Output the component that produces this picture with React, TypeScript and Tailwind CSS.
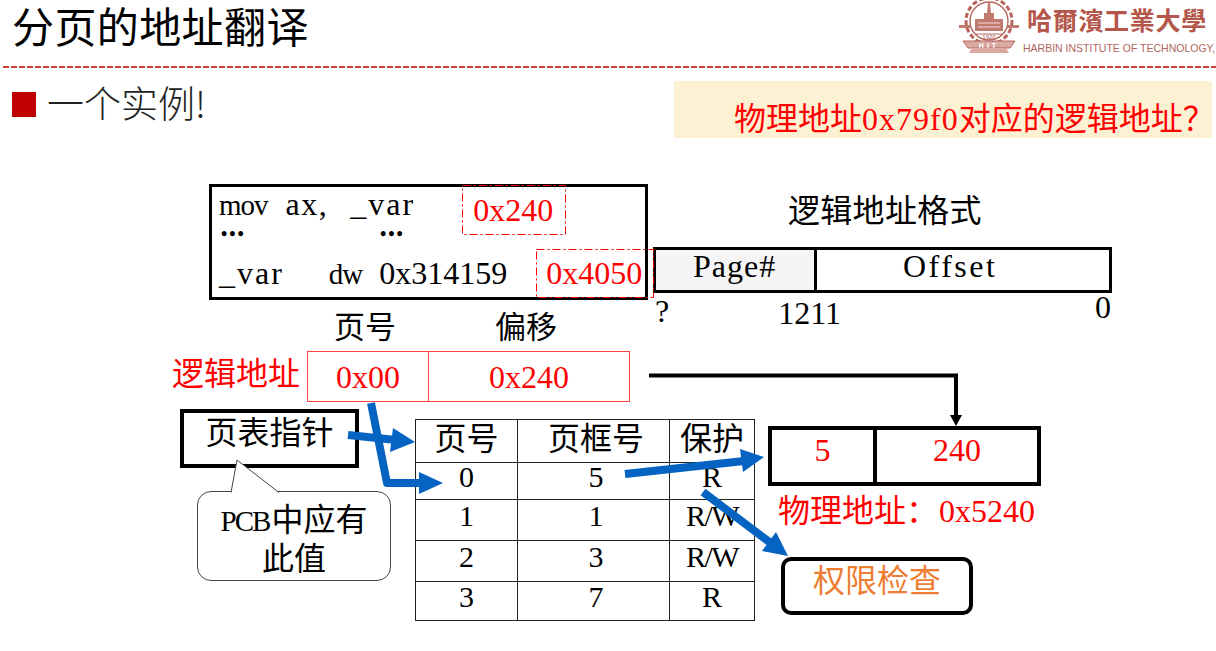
const tableRows = [
  ["页号", "页框号", "保护"],
  ["0", "5", "R"],
  ["1", "1", "R/W"],
  ["2", "3", "R/W"],
  ["3", "7", "R"],
];

function HitLogo() {
  return (
    <svg width="64" height="56" viewBox="0 0 64 56" className="shrink-0">
      <g fill="none" stroke="#b5655a">
        <circle cx="31" cy="21" r="23" strokeWidth="3" strokeDasharray="5 2.5" />
        <circle cx="31" cy="21" r="19" strokeWidth="1.4" />
      </g>
      <g fill="#c07a70">
        <path d="M30 3h2l1 10h-4z" />
        <rect x="26" y="13" width="10" height="6" />
        <rect x="17" y="19" width="28" height="12" />
        <rect x="1" y="25" width="12" height="3" />
        <rect x="49" y="25" width="12" height="3" />
      </g>
      <path d="M20 23h22M20 27h22" stroke="#f3dcd8" strokeWidth="1" />
      <path d="M18 34h26" stroke="#b5655a" strokeWidth="1" />
      <path d="M5 41h52l-5 7H10z" fill="#d9a9a2" stroke="#b5655a" strokeWidth="1" />
      <path d="M14 48h34l3 5H11z" fill="#d9a9a2" />
      <text x="31" y="38.5" fontSize="6" fontFamily="Liberation Sans" fill="#a5584d" textAnchor="middle">1920</text>
      <text x="31" y="47.5" fontSize="7" fontWeight="700" letterSpacing="3" fontFamily="Liberation Sans" fill="#fff" textAnchor="middle">HIT</text>
    </svg>
  );
}

function Overlay() {
  return (
    <svg width="1216" height="651" className="absolute inset-0 pointer-events-none">
      <g fill="none" stroke="#ff0000" strokeWidth="1" strokeDasharray="8 3 2 3">
        <rect x="462.5" y="185.5" width="103" height="49" />
        <rect x="536.5" y="249.5" width="117" height="48" />
      </g>
      <path d="M649 375.5H956V418" fill="none" stroke="#000" strokeWidth="4" />
      <path d="M950 415h12l-6 11z" fill="#000" />
      <g fill="none" stroke="#0563c1" strokeWidth="8" strokeLinejoin="round">
        <path d="M348 435L396 440" />
        <path d="M371 403L387 483H422" />
        <path d="M625 474L744 461" />
        <path d="M703 492L772 544" />
      </g>
      <g fill="#0563c1">
        <path d="M393 428L390 452L415 442z" />
        <path d="M419 472V494L443 483z" />
        <path d="M740 449L743 472L764 457z" />
        <path d="M776 532L762 551L788 556z" />
      </g>
    </svg>
  );
}

function CodeBox() {
  return (
    <div className="absolute left-[209px] top-[184px] w-[439px] h-[116px] border-[3px] border-black pl-[7px] whitespace-pre text-[32px] leading-[32px]">
      <div className="flex items-start h-[31px]">
        <span className="mt-[2px] text-[29px] tracking-[-1px]">mov</span>
        <span className="ml-[18px] mt-[1px] tracking-[1.5px]">ax,</span>
        <span className="ml-[22px] mt-[1px] tracking-[2px]">_var</span>
        <span className="ml-[58px] mt-[7px] text-[#ff0000]">0x240</span>
      </div>
      <div className="flex items-start h-[26px] pt-[6px] text-[18px] leading-[20px] tracking-[2px] font-bold">
        <span className="ml-[2px]">•••</span>
        <span className="ml-[134px]">•••</span>
      </div>
      <div className="flex items-baseline h-[32px] mt-[13px]">
        <span className="tracking-[2px]">_var</span>
        <span className="ml-[45px] text-[29px] tracking-[-1px]">dw</span>
        <span className="ml-[17px]">0x314159</span>
        <span className="ml-[39px] text-[#ff0000]">0x4050</span>
      </div>
    </div>
  );
}

function AddressFormat() {
  return (
    <div className="absolute left-[653px] top-[195px] w-[459px] text-[32px] leading-[32px]">
      <div className="pl-[135px] tracking-[0.3px] whitespace-nowrap">逻辑地址格式</div>
      <div className="flex h-[46px] mt-[20px] border-[3px] border-black">
        <div className="w-[161px] h-full bg-[#f5f5f5] border-r-[3px] border-black pl-[37px] tracking-[1px]">Page#</div>
        <div className="flex-1 pl-[86px] tracking-[2.5px]">Offset</div>
      </div>
      <div className="flex items-start">
        <span className="mt-[2px] ml-[2px]">?</span>
        <span className="mt-[4px] ml-[109px]">1211</span>
        <span className="ml-auto mr-[1px] -mt-[2px]">0</span>
      </div>
    </div>
  );
}

function LogicalAddress() {
  return (
    <div className="absolute left-[172px] top-[312px] w-[458px]">
      <div className="flex h-[32px] pl-[162px] gap-[99px] text-[31px] leading-[32px] whitespace-nowrap">
        <span>页号</span>
        <span>偏移</span>
      </div>
      <div className="flex items-start mt-[7px] text-[32px] leading-[32px] text-[#ff0000]">
        <span className="w-[135px] mt-[7px] whitespace-nowrap">逻辑地址</span>
        <div className="flex w-[323px] h-[51px] border border-[#ff4040]">
          <div className="w-[121px] border-r border-[#ff4040] flex items-center justify-center">0x00</div>
          <div className="flex-1 flex items-center justify-center">0x240</div>
        </div>
      </div>
    </div>
  );
}

function PagePointer() {
  return (
    <div className="absolute left-[180px] top-[409px] w-[211px]">
      <div className="w-[179px] h-[59px] border-[4px] border-black text-center text-[32px] leading-[40px] whitespace-nowrap">页表指针</div>
      <div className="relative ml-[17px] mt-[23px] w-[194px] h-[90px] rounded-[14px] border border-[#444] bg-white pt-[9px] text-center text-[32px] leading-[39px]">
        <svg width="52" height="34" className="absolute left-[32px] -top-[33px]">
          <path d="M1 33.5L7 1L49 33.5" fill="#fff" stroke="#444" strokeWidth="1" />
        </svg>
        <div className="h-[39px]"><span className="text-[29px] tracking-[-2px] mr-[2px]">PCB</span>中应有</div>
        <div className="h-[39px]">此值</div>
      </div>
    </div>
  );
}

function PageTable() {
  return (
    <div className="absolute left-[415px] top-[419px] w-[340px] h-[202px] grid grid-cols-[102px_152px_85px] grid-rows-[43px_37px_41px_41px_39px] border-t border-l border-[#222]">
      {tableRows.map((row, i) =>
        row.map((cell, j) => (
          <div
            key={i + "-" + j}
            className={
              "flex items-center justify-center border-r border-b border-[#222] whitespace-nowrap " +
              (i === 0 ? "pb-[4px] text-[32px] leading-[32px] " : "pb-[8px] text-[30px] leading-[30px] ") +
              (j === 1 ? "pl-[5px] " : "") +
              (j === 2 && cell === "R/W" ? "text-[28px] tracking-[-1.5px]" : "")
            }
          >
            {cell}
          </div>
        ))
      )}
    </div>
  );
}

function PhysicalAddress() {
  return (
    <div className="absolute left-[768px] top-[426px] w-[273px] text-[32px] leading-[32px]">
      <div className="flex h-[60px] border-[4px] border-black text-[#ff0000]">
        <div className="w-[105px] border-r-[4px] border-black text-center pt-[4px]">5</div>
        <div className="flex-1 text-center pt-[4px]">240</div>
      </div>
      <div className="mt-[9px] pl-[10px] text-[#ff0000] whitespace-nowrap">物理地址：<span className="ml-[1px]">0x5240</span></div>
      <div className="ml-[13px] mt-[30px] w-[192px] h-[58px] rounded-[10px] border-[4px] border-black text-center leading-[40px] text-[#ed7d31] whitespace-nowrap">权限检查</div>
    </div>
  );
}

export default function App() {
  return (
    <div className="relative w-[1216px] h-[651px] overflow-hidden bg-white text-black font-['Liberation_Serif','Noto_Sans_CJK_SC',serif]">
      <header className="flex items-start justify-between h-[66px] pl-[12px]">
        <h1 className="text-[42px] leading-[50px] tracking-[0.4px] font-normal font-['Noto_Sans_CJK_SC',sans-serif]">分页的地址翻译</h1>
        <div className="flex items-start w-[258px] shrink-0">
          <HitLogo />
          <div className="ml-[1px] whitespace-nowrap">
            <div className="mt-[4px] pl-[4px] text-[25px] leading-[30px] tracking-[0.7px] font-bold text-[#b5564a] font-['Noto_Sans_CJK_TC',sans-serif]">哈爾濱工業大學</div>
            <div className="mt-[8px] text-[10.5px] leading-[12px] text-[#b0665c] font-['Liberation_Sans',sans-serif]">HARBIN INSTITUTE OF TECHNOLOGY,</div>
          </div>
        </div>
      </header>
      <div className="h-[2px] ml-[3px] bg-[repeating-linear-gradient(90deg,#c8402f_0_6px,transparent_6px_8px)]" />

      <div className="flex items-start justify-between pl-[12px] pr-[4px] pt-[13px]">
        <div className="flex items-center gap-[11px] mt-[6px]">
          <span className="w-[24px] h-[25px] bg-[#c00000]" />
          <span className="-mt-[5px] text-[37px] leading-[40px] font-light text-[#222] font-['Noto_Sans_CJK_SC',sans-serif]">一个实例!</span>
        </div>
        <div className="w-[538px] h-[57px] bg-[#fdf1d3] pl-[60px] pt-[20px] text-[32px] leading-[36px] text-[#ff0000] whitespace-nowrap">
          物理地址<span className="tracking-[1px]">0x79f0</span>对应的逻辑地址？
        </div>
      </div>

      <CodeBox />
      <AddressFormat />
      <LogicalAddress />
      <PagePointer />
      <PageTable />
      <PhysicalAddress />
      <Overlay />
    </div>
  );
}
